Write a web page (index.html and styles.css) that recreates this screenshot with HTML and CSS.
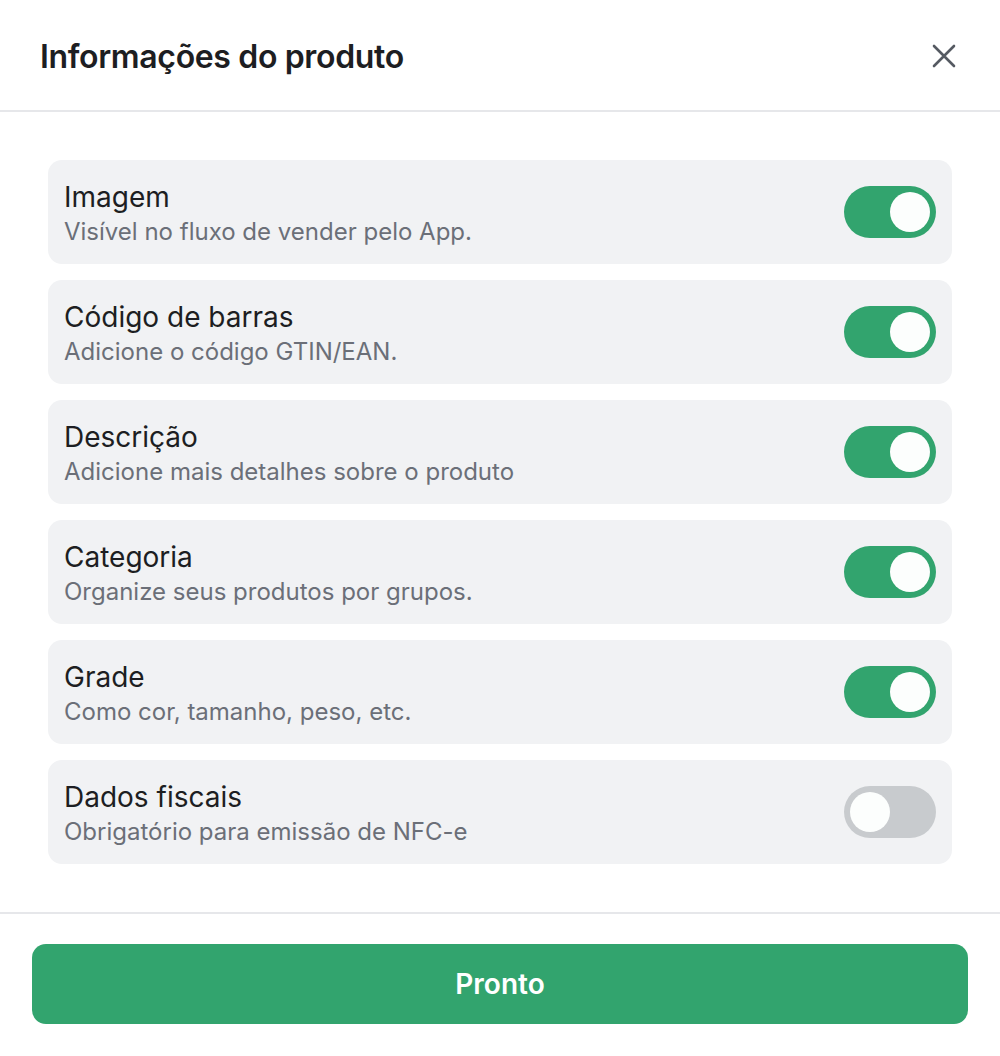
FILE: index.html
```html
<!DOCTYPE html>
<html lang="pt-BR">
<head>
<meta charset="utf-8">
<link rel="stylesheet" href="styles.css">
</head>
<body>
<div class="modal">
  <header class="header">
    <h1 class="title">Informações do produto</h1>
    <button class="close" aria-label="Fechar">
      <svg width="26" height="26" viewBox="0 0 26 26" fill="none" stroke="#555a62" stroke-width="2.6" stroke-linecap="round"><path d="M3 3L23 23M23 3L3 23"/></svg>
    </button>
  </header>
  <main class="list">
    <div class="item"><div class="text"><div class="name">Imagem</div><div class="desc">Visível no fluxo de vender pelo App.</div></div><span class="toggle on"><span class="knob"></span></span></div>
    <div class="item"><div class="text"><div class="name">Código de barras</div><div class="desc">Adicione o código GTIN/EAN.</div></div><span class="toggle on"><span class="knob"></span></span></div>
    <div class="item"><div class="text"><div class="name">Descrição</div><div class="desc">Adicione mais detalhes sobre o produto</div></div><span class="toggle on"><span class="knob"></span></span></div>
    <div class="item"><div class="text"><div class="name">Categoria</div><div class="desc">Organize seus produtos por grupos.</div></div><span class="toggle on"><span class="knob"></span></span></div>
    <div class="item"><div class="text"><div class="name">Grade</div><div class="desc">Como cor, tamanho, peso, etc.</div></div><span class="toggle on"><span class="knob"></span></span></div>
    <div class="item"><div class="text"><div class="name">Dados fiscais</div><div class="desc">Obrigatório para emissão de NFC-e</div></div><span class="toggle"><span class="knob"></span></span></div>
  </main>
  <footer class="footer">
    <button class="done">Pronto</button>
  </footer>
</div>
</body>
</html>
```
FILE: styles.css
```css
* { box-sizing: border-box; }
html, body { margin: 0; padding: 0; background: #ffffff; }
body { font-family: Inter, "Noto Sans", sans-serif; color: #1d1e22; }
.modal { width: 1000px; height: 1056px; display: flex; flex-direction: column; }
.header {
  height: 112px;
  display: flex;
  align-items: center;
  justify-content: space-between;
  padding: 2px 40px 0 40px;
  border-bottom: 2px solid #e6e7ea;
}
.title { margin: 0; font-size: 32px; font-weight: 600; letter-spacing: -0.35px; color: #1d1e22; }
.close { border: 0; background: none; padding: 0; margin-right: 0; width: 32px; height: 32px; display: flex; align-items: center; justify-content: center; }
.list { padding: 48px 48px 48px; display: flex; flex-direction: column; gap: 16px; }
.item {
  height: 104px;
  background: #f1f2f4;
  border-radius: 14px;
  display: flex;
  align-items: center;
  justify-content: space-between;
  padding: 0 16px;
}
.text { display: flex; flex-direction: column; padding-top: 4px; }
.name { font-size: 28px; line-height: 36px; color: #1d1e22; }
.desc { font-size: 24px; line-height: 34px; color: #6b6f78; }
.toggle {
  width: 92px; height: 52px; border-radius: 26px; background: #c8cbce;
  display: flex; align-items: center; padding: 0 6px; justify-content: flex-start;
}
.toggle.on { background: #32a46e; justify-content: flex-end; }
.knob { width: 40px; height: 40px; border-radius: 50%; background: #fcfefd; }
.footer { border-top: 2px solid #e6e7ea; padding: 30px 32px 32px; }
.done {
  width: 100%; height: 80px; border: 0; border-radius: 14px; background: #32a46e;
  color: #ffffff; font-family: Inter, "Noto Sans", sans-serif; font-size: 28px; font-weight: 600;
}
```
